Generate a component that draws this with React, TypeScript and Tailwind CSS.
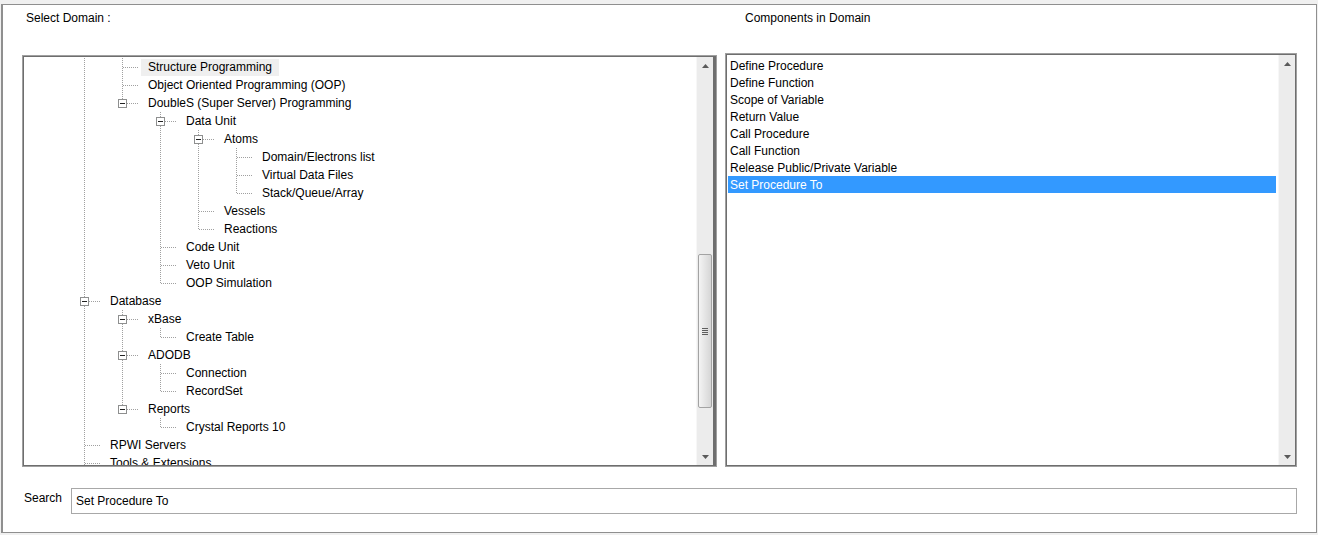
import React from "react";

type Row = { l: number; t: string; g: number[]; last?: boolean; box?: boolean; hl?: boolean };

const tree: Row[] = [
  { l: 1, t: "Structure Programming", g: [1], hl: true },
  { l: 1, t: "Object Oriented Programming (OOP)", g: [1] },
  { l: 1, t: "DoubleS (Super Server) Programming", g: [1], last: true, box: true },
  { l: 2, t: "Data Unit", g: [1, 0], box: true },
  { l: 3, t: "Atoms", g: [1, 0, 1], box: true },
  { l: 4, t: "Domain/Electrons list", g: [1, 0, 1, 1] },
  { l: 4, t: "Virtual Data Files", g: [1, 0, 1, 1] },
  { l: 4, t: "Stack/Queue/Array", g: [1, 0, 1, 1], last: true },
  { l: 3, t: "Vessels", g: [1, 0, 1] },
  { l: 3, t: "Reactions", g: [1, 0, 1], last: true },
  { l: 2, t: "Code Unit", g: [1, 0] },
  { l: 2, t: "Veto Unit", g: [1, 0] },
  { l: 2, t: "OOP Simulation", g: [1, 0], last: true },
  { l: 0, t: "Database", g: [], box: true },
  { l: 1, t: "xBase", g: [1], box: true },
  { l: 2, t: "Create Table", g: [1, 1], last: true },
  { l: 1, t: "ADODB", g: [1], box: true },
  { l: 2, t: "Connection", g: [1, 1] },
  { l: 2, t: "RecordSet", g: [1, 1], last: true },
  { l: 1, t: "Reports", g: [1], last: true, box: true },
  { l: 2, t: "Crystal Reports 10", g: [1, 0], last: true },
  { l: 0, t: "RPWI Servers", g: [] },
  { l: 0, t: "Tools & Extensions", g: [] },
];

const components = [
  "Define Procedure",
  "Define Function",
  "Scope of Variable",
  "Return Value",
  "Call Procedure",
  "Call Function",
  "Release Public/Private Variable",
  "Set Procedure To",
];

const DOT = "#a0a0a0";

const Guide = ({ on }: { on: number }) => (
  <svg width="38" height="18" className="shrink-0">
    {on ? <line x1="19.5" y1="0" x2="19.5" y2="18" stroke={DOT} strokeDasharray="1 1" /> : null}
  </svg>
);

const Connector = ({ last, box }: { last?: boolean; box?: boolean }) => (
  <svg width="38" height="18" className="shrink-0">
    <line x1="19.5" y1="0" x2="19.5" y2={last ? 9 : 18} stroke={DOT} strokeDasharray="1 1" />
    <line x1="20" y1="9.5" x2="36" y2="9.5" stroke={DOT} strokeDasharray="1 1" />
    {box && (
      <>
        <rect x="15.5" y="5.5" width="8" height="8" fill="#fff" stroke="#8e8f8f" />
        <line x1="17" y1="9.5" x2="22" y2="9.5" stroke="#222" />
      </>
    )}
  </svg>
);

const Arrow = ({ up }: { up?: boolean }) => (
  <div className="flex h-[17px] items-center justify-center">
    <svg width="7" height="4">
      <path d={up ? "M0 4 L3.5 0 L7 4 Z" : "M0 0 L7 0 L3.5 4 Z"} fill="#5a5a5a" />
    </svg>
  </div>
);

const ScrollBar = ({ thumb }: { thumb?: boolean }) => (
  <div className="flex w-[17px] shrink-0 flex-col border-l border-[#f7f7f7] bg-[#ececec]">
    <Arrow up />
    <div className="flex-1">
      {thumb && (
        <div className="mx-[1px] mt-[180px] flex h-[154px] items-center justify-center rounded-[2px] border border-[#a3a3a3] bg-gradient-to-r from-[#f4f4f4] to-[#d6d6d6]">
          <div className="flex flex-col gap-[1px]">
            <div className="h-px w-[6px] bg-[#5e5e5e]" />
            <div className="h-px w-[6px] bg-[#5e5e5e]" />
            <div className="h-px w-[6px] bg-[#5e5e5e]" />
            <div className="h-px w-[6px] bg-[#5e5e5e]" />
          </div>
        </div>
      )}
    </div>
    <Arrow />
  </div>
);

const App = () => {
  return (
    <div className="h-[535px] w-[1318px] bg-[#f0f0f0] px-[1px] pt-[4px] font-['Liberation_Sans',Arial,sans-serif] text-[12px] leading-[14px] text-black">
      <div className="h-[529px] border-t border-r border-b border-l-2 border-[#8f8f8f] bg-white pl-[19px] pt-[6px]">
        <div className="flex">
          <div className="flex w-[695px] flex-col">
            <div className="pl-[4px]">Select Domain :</div>
            <div className="mt-[30px] h-[412px] border border-[#a0a0a0]">
              <div className="flex h-full border border-r-[3px] border-[#6e6e6e]">
                <div className="flex-1 overflow-hidden pl-[41px] pt-[1px]">
                  {tree.map((r, i) => (
                    <div key={i} className="flex h-[18px] items-center">
                      {r.g.map((on, k) => (
                        <Guide key={k} on={on} />
                      ))}
                      <Connector last={r.last} box={r.box} />
                      <div className={`flex h-[17px] items-center whitespace-nowrap px-[7px] ${r.hl ? "bg-[#efefef]" : ""}`}>
                        {r.t}
                      </div>
                    </div>
                  ))}
                </div>
                <ScrollBar thumb />
              </div>
            </div>
          </div>
          <div className="ml-[8px] flex w-[572px] flex-col">
            <div className="pl-[20px]">Components in Domain</div>
            <div className="mt-[28px] h-[414px] border border-[#a0a0a0]">
              <div className="flex h-full border border-[#6e6e6e]">
                <div className="flex-1 px-[1px] pt-[2px]">
                  {components.map((c, i) => (
                    <div
                      key={c}
                      className={`mr-[1px] flex h-[17px] items-center px-[2px] ${i === components.length - 1 ? "bg-[#3399ff] text-white" : ""}`}
                    >
                      {c}
                    </div>
                  ))}
                </div>
                <ScrollBar />
              </div>
            </div>
          </div>
        </div>
        <div className="ml-[2px] mt-[21px] flex items-start">
          <div className="w-[47px] pt-[3px]">Search</div>
          <div className="flex h-[26px] w-[1226px] items-center border border-[#a8a8a8] pl-[4px]">
            Set Procedure To
          </div>
        </div>
      </div>
    </div>
  );
};

export default App;
